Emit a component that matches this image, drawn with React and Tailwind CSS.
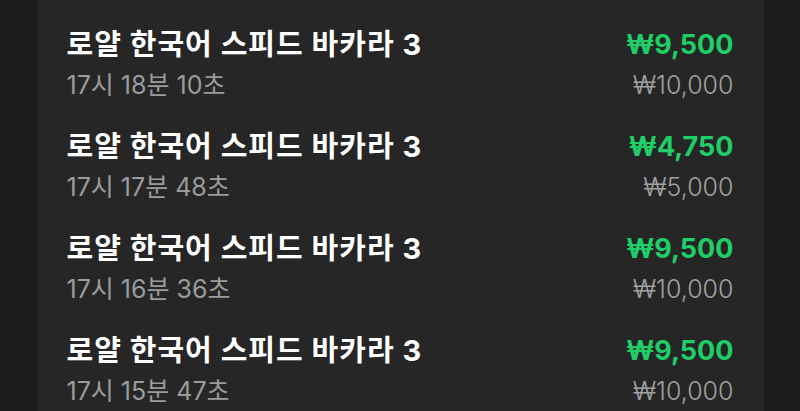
export default function App() {
  const rows = [
    { t: "17시 18분 10초", win: "₩9,500", bet: "₩10,000" },
    { t: "17시 17분 48초", win: "₩4,750", bet: "₩5,000" },
    { t: "17시 16분 36초", win: "₩9,500", bet: "₩10,000" },
    { t: "17시 15분 47초", win: "₩9,500", bet: "₩10,000" },
  ];
  return (
    <div className="w-[800px] h-[411px] overflow-hidden bg-[#1c1c1c] flex justify-center" style={{ fontFamily: 'Inter, "Noto Sans CJK KR", sans-serif' }}>
      <div className="w-[727px] h-full bg-[#262626] pl-[30px] pr-[30px] pt-[14px] flex flex-col">
        {rows.map((r, i) => (
          <div key={i} className="flex justify-between py-[11px] h-[102px]">
            <div className="flex flex-col">
              <div className="h-[40px] leading-[40px] text-[29px] font-bold text-white tracking-[1px]">로얄 한국어 스피드 바카라 3</div>
              <div className="h-[40px] leading-[40px] text-[25px] font-normal text-[#9b9b9b]">{r.t}</div>
            </div>
            <div className="flex flex-col items-end">
              <div className="h-[40px] leading-[40px] text-[27px] font-bold text-[#1ecf68]">{r.win}</div>
              <div className="h-[40px] leading-[40px] text-[25px] font-light text-[#a0a0a0]">{r.bet}</div>
            </div>
          </div>
        ))}
      </div>
    </div>
  );
}
